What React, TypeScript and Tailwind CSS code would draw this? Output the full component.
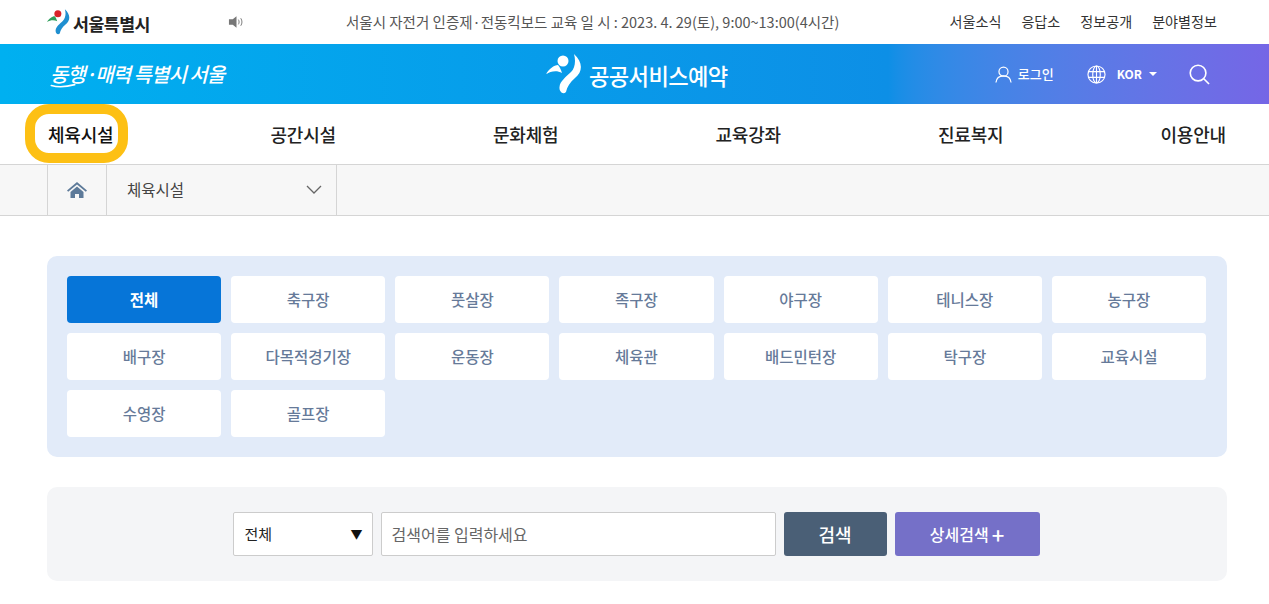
const font = "font-['Noto_Sans_CJK_KR','Noto_Sans',sans-serif]";

const navItems = ["체육시설", "공간시설", "문화체험", "교육강좌", "진료복지", "이용안내"];
const categories = [
  "전체", "축구장", "풋살장", "족구장", "야구장", "테니스장", "농구장",
  "배구장", "다목적경기장", "운동장", "체육관", "배드민턴장", "탁구장", "교육시설",
  "수영장", "골프장",
];
const topLinks = ["서울소식", "응답소", "정보공개", "분야별정보"];

const SeoulMark = ({ white }: { white?: boolean }) => (
  <svg viewBox="0 0 36 40" className={white ? "w-[36px] h-[40px]" : "w-[23px] h-[26px]"}>
    <path d="M0 20C3 15 8 11 12 11C14 13 15 16 16 19C11 16 5 17 0 20Z" fill={white ? "#fff" : "#2e9e5b"} />
    <circle cx="17" cy="7" r="5.500" fill={white ? "#fff" : "#d8232a"} />
    <path d="M28 0C37 8 37 18 29 24C24 28 21 33 20 38C17 41 13 38 13.500 33C14 27 20 23 25 18C29 14 30 7 28 0Z" fill={white ? "#fff" : "#1f8fd0"} />
  </svg>
);

const App = () => {
  return (
    <div className={`${font} h-[604px] overflow-hidden bg-white text-[#333]`}>
      {/* top bar */}
      <div className="h-[44px] flex items-center pl-[47px] pr-[52px]">
        <div className="w-[181px] flex items-center">
          <SeoulMark />
          <span className="ml-[3px] mt-[3px] text-[17.3px] font-bold text-[#222] tracking-[-0.5px]">서울특별시</span>
        </div>
        <svg viewBox="0 0 18 14" className="w-[17px] h-[14px] text-[#777]" fill="currentColor">
          <path d="M1 4h4l4-3v12l-4-3H1z" />
          <path d="M11 4.500c1 1.500 1 3.500 0 5M13.500 3c1.700 2.500 1.700 5.500 0 8" fill="none" stroke="currentColor" />
        </svg>
        <p className="ml-[101px] text-[14.5px] text-[#555] whitespace-nowrap">
          서울시 자전거 인증제·전동킥보드 교육 일 시 : 2023. 4. 29(토), 9:00~13:00(4시간)
        </p>
        <div className="ml-auto flex gap-[20px] text-[14.1px] text-[#333]">
          {topLinks.map((link) => (
            <span key={link}>{link}</span>
          ))}
        </div>
      </div>

      {/* blue header */}
      <div className="relative h-[60px] flex items-center pl-[50px] pr-[59px] bg-gradient-to-r from-[#00b0f0] via-[#0d8fe6] via-70% to-[#7566e6] text-white">
        <span className="relative w-[300px] text-[20px] italic font-medium tracking-[-1px] whitespace-nowrap">
          동행·매력 특별시 서울
          <svg viewBox="0 0 30 6" className="absolute left-0 top-[24px] w-[26px] h-[5px]" fill="none" stroke="currentColor" strokeWidth="2" strokeLinecap="round">
            <path d="M1 3C8 5 18 5 29 2" />
          </svg>
        </span>
        <div className="absolute left-[546px] top-[10px] flex items-center">
          <SeoulMark white />
          <span className="ml-[7px] mt-[3px] text-[22.2px] font-medium tracking-[-0.6px]">공공서비스예약</span>
        </div>
        <div className="ml-auto flex items-center">
          <svg viewBox="0 0 18 18" className="w-[17px] h-[17px]" fill="none" stroke="currentColor" strokeWidth="1.300">
            <circle cx="9" cy="6" r="4.800" />
            <path d="M1 17.500c.5-4.500 3.500-7 8-7s7.500 2.500 8 7" />
          </svg>
          <span className="ml-[6px] text-[13px] font-medium">로그인</span>
          <svg viewBox="0 0 20 20" className="ml-[33px] w-[19px] h-[19px]" fill="none" stroke="currentColor" strokeWidth="1.200">
            <circle cx="10" cy="10" r="9" />
            <ellipse cx="10" cy="10" rx="4" ry="9" />
            <path d="M1 7h18M1 13h18M10 1v18" />
          </svg>
          <span className="ml-[11px] text-[12px] font-bold">KOR</span>
          <span className="ml-[7px] w-0 h-0 border-x-[4px] border-x-transparent border-t-[4px] border-t-white" />
          <svg viewBox="0 0 22 22" className="ml-[32px] w-[21px] h-[21px]" fill="none" stroke="currentColor" strokeWidth="1.700">
            <circle cx="9.500" cy="9.500" r="8.200" />
            <path d="M15.500 15.500l5.500 5.500" />
          </svg>
        </div>
      </div>

      {/* main nav */}
      <div className="h-[60px] flex items-center justify-between pl-[48px] pr-[43px] border-b border-[#d5d5d5] box-content">
        {navItems.map((item, i) => (
          <span
            key={item}
            className={`relative text-[18px] font-medium tracking-[-0.2px] whitespace-nowrap ${i === 0 ? "text-[#111]" : "text-[#222]"}`}
          >
            {i === 0 && (
              <span className="absolute -left-[23px] -right-[15px] -top-[17px] -bottom-[15px] border-[10px] border-[#fdc014] rounded-[24px]" />
            )}
            {item}
          </span>
        ))}
      </div>

      {/* breadcrumb */}
      <div className="h-[51px] bg-[#f7f7f7] border-b border-[#d5d5d5] pl-[47px] flex">
        <div className="w-[60px] border-x border-[#d5d5d5] flex items-center justify-center">
          <svg viewBox="0 0 20 16" className="w-[20px] h-[16px]" fill="#5d7a99">
            <path d="M10 0L0 8.500l1.200 1.300L10 2.500l8.800 7.300L20 8.500z" />
            <path d="M3.500 10L10 4.500 16.500 10v6H12v-4H8v4H3.500z" />
          </svg>
        </div>
        <div className="w-[230px] border-r border-[#d5d5d5] flex items-center justify-between pl-[20px] pr-[14px]">
          <span className="text-[15.5px] text-[#444]">체육시설</span>
          <svg viewBox="0 0 16 10" className="w-[16px] h-[10px]" fill="none" stroke="#666" strokeWidth="1.300">
            <path d="M1 1l7 7 7-7" />
          </svg>
        </div>
      </div>

      {/* categories */}
      <div className="mr-[42px] ml-[47px] mt-[40px] rounded-[10px] bg-[#e2ebf9] pl-[20px] pr-[21px] py-[20px] grid grid-cols-7 gap-[10px]">
        {categories.map((cat, i) => (
          <div
            key={cat}
            className={`h-[47px] rounded-[4px] flex items-center justify-center text-[15.5px] ${
              i === 0 ? "bg-[#0675d8] text-white font-bold" : "bg-white text-[#667a99] font-medium"
            }`}
          >
            {cat}
          </div>
        ))}
      </div>

      {/* search */}
      <div className="ml-[47px] mr-[42px] mt-[30px] h-[94px] rounded-[10px] bg-[#f4f5f7] flex items-center justify-center gap-[8px] pr-[2px]">
        <div className="w-[140px] h-[44px] bg-white border border-[#ccc] rounded-[2px] flex items-center justify-between pl-[11px] pr-[9px]">
          <span className="text-[15px] text-[#222]">전체</span>
          <span className="text-[12px] text-[#111]">▼</span>
        </div>
        <div className="w-[395px] h-[44px] bg-white border border-[#ccc] rounded-[2px] flex items-center pl-[10px]">
          <span className="text-[16px] text-[#666]">검색어를 입력하세요</span>
        </div>
        <div className="w-[103px] h-[44px] rounded-[3px] bg-[#4a5f76] text-white text-[18px] font-medium flex items-center justify-center">
          검색
        </div>
        <div className="w-[145px] h-[44px] rounded-[3px] bg-[#7570c8] text-white text-[16px] font-medium flex items-center justify-center">
          상세검색<span className="ml-[3px] text-[22px] leading-none">+</span>
        </div>
      </div>
    </div>
  );
};

export default App;
